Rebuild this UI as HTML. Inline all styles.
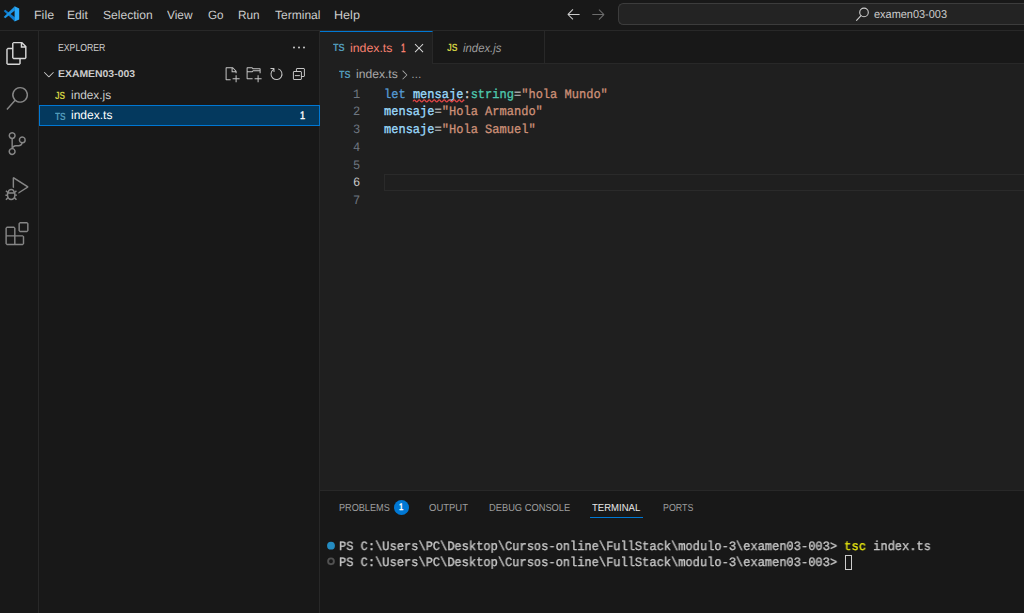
<!DOCTYPE html>
<html><head><meta charset="utf-8">
<style>
*{margin:0;padding:0;box-sizing:border-box}
html,body{width:1024px;height:613px;overflow:hidden;background:#181818}
body{position:relative;font-family:"Liberation Sans",sans-serif;color:#cccccc;-webkit-font-smoothing:antialiased;text-rendering:geometricPrecision}
.a{position:absolute}
.t{position:absolute;white-space:pre;line-height:1;transform-origin:0 0}
.mono{font-family:"Liberation Mono",monospace}
#titlebar{left:0;top:0;width:1024px;height:31px;background:#181818;border-bottom:1px solid #282828}
#activity{left:0;top:31px;width:39px;height:582px;background:#181818;border-right:1px solid #282828}
#sidebar{left:39px;top:31px;width:281px;height:582px;background:#181818;border-right:1px solid #282828}
#editor{left:320px;top:31px;width:704px;height:459px;background:#1f1f1f}
#tabs{left:320px;top:31px;width:704px;height:33px;background:#181818;border-bottom:1px solid #282828}
#tab1{left:320px;top:31px;width:113px;height:33px;background:#1f1f1f;border-top:1px solid #0078d4;border-right:1px solid #282828}
#tab2{left:433px;top:31px;width:112px;height:33px;background:#181818;border-right:1px solid #282828;border-bottom:1px solid #282828}
#panel{left:320px;top:490px;width:704px;height:123px;background:#181818;border-top:1px solid #282828}
#cmd{left:618.2px;top:2.7px;width:405.8px;height:22.2px;background:#232323;border:1px solid #3c3c3c;border-right:none;border-radius:5.5px 0 0 5.5px}
#selrow{left:39px;top:105px;width:281px;height:21px;background:#04395e;border:1px solid #0078d4}
#curline{left:384px;top:174px;width:640px;height:17px;border:1px solid #2a2a2a;border-right:none}
.menu{font-size:12px;color:#cccccc}
.code{font-size:12.8px;transform:scaleX(0.94);-webkit-text-stroke:0.3px}
.ln{font-size:12.8px;color:#6e7681;transform:scaleX(0.94)}
.term{font-size:12.8px;color:#c8c8c8;transform:scaleX(0.94);will-change:transform;-webkit-text-stroke:0.35px currentColor}
.ptab{font-size:10.2px;color:#9d9d9d}
</style></head><body>
<div class="a" id="titlebar"></div>
<div class="a" id="activity"></div>
<div class="a" id="sidebar"></div>
<div class="a" id="editor"></div>
<div class="a" id="tabs"></div>
<div class="a" id="tab1"></div>
<div class="a" id="tab2"></div>
<div class="a" id="panel"></div>
<div class="a" id="cmd"></div>
<div class="a" id="selrow"></div>
<div class="a" id="curline"></div>

<!-- menu -->
<span class="t menu" id="m1" style="top:9px;left:34.0px;transform:scaleX(1.038)">File</span>
<span class="t menu" id="m2" style="top:9px;left:67.0px;transform:scaleX(1.013)">Edit</span>
<span class="t menu" id="m3" style="top:9px;left:103.0px;transform:scaleX(1.006)">Selection</span>
<span class="t menu" id="m4" style="top:9px;left:167.0px;transform:scaleX(0.988)">View</span>
<span class="t menu" id="m5" style="top:9px;left:208.0px;transform:scaleX(0.972)">Go</span>
<span class="t menu" id="m6" style="top:9px;left:238.0px;transform:scaleX(0.985)">Run</span>
<span class="t menu" id="m7" style="top:9px;left:275.0px;transform:scaleX(1.002)">Terminal</span>
<span class="t menu" id="m8" style="top:9px;left:334.0px;transform:scaleX(1.050)">Help</span>
<span class="t" id="cmdt" style="left:874.0px;top:10px;font-size:11.5px;color:#cccccc;transform:scaleX(0.951)">examen03-003</span>

<!-- sidebar -->
<span class="t" id="s1" style="left:58.0px;top:44px;font-size:10.2px;color:#cccccc;transform:scaleX(0.854)">EXPLORER</span>
<span class="t" id="s2" style="left:58.0px;top:70px;font-size:9.9px;font-weight:bold;color:#cccccc;transform:scaleX(1.055)">EXAMEN03-003</span>
<span class="t" id="s3i" style="left:55.0px;top:91px;font-size:10.5px;font-weight:bold;color:#cbcb41;transform:scaleX(0.790)">JS</span>
<span class="t" id="s3" style="left:71.0px;top:89px;font-size:12px;color:#cccccc;transform:scaleX(0.985)">index.js</span>
<span class="t" id="s4i" style="left:55.0px;top:112px;font-size:10.5px;font-weight:bold;color:#519aba;transform:scaleX(0.799)">TS</span>
<span class="t" id="s4" style="left:71.0px;top:109px;font-size:12px;color:#ffffff;transform:scaleX(1.001)">index.ts</span>
<span class="t" id="s5" style="-webkit-text-stroke:0.45px;left:300.0px;top:111.1px;font-size:11px;color:#ffffff;transform:scaleX(0.832)">1</span>

<!-- tabs -->
<span class="t" id="t1i" style="left:333.0px;top:43px;font-size:10.5px;font-weight:bold;color:#519aba;transform:scaleX(0.876)">TS</span>
<span class="t" id="t1" style="left:350.0px;top:42px;font-size:12px;color:#f88070;transform:scaleX(1.024)">index.ts</span>
<span class="t" id="t1n" style="-webkit-text-stroke:0.45px;left:401.0px;top:42px;font-size:12px;color:#f88070;transform:scaleX(0.670)">1</span>
<span class="t" id="t2i" style="left:447.0px;top:43px;font-size:10.5px;font-weight:bold;color:#cbcb41;transform:scaleX(0.822)">JS</span>
<span class="t" id="t2" style="left:463.0px;top:42px;font-size:12px;font-style:italic;color:#9d9d9d;transform:scaleX(0.945)">index.js</span>

<!-- breadcrumb -->
<span class="t" id="b1i" style="left:339.0px;top:70px;font-size:10.5px;font-weight:bold;color:#519aba;transform:scaleX(0.861)">TS</span>
<span class="t" id="b1" style="left:356.0px;top:68px;font-size:12px;color:#a9a9a9;transform:scaleX(1.010)">index.ts</span>
<span class="t" id="b2" style="left:411.0px;top:68px;font-size:12px;color:#a9a9a9;transform:scaleX(0.890)">…</span>

<!-- code -->
<span class="t mono ln" style="left:352.9px;top:88.6px">1</span>
<span class="t mono ln" style="left:352.9px;top:106.4px">2</span>
<span class="t mono ln" style="left:352.9px;top:124.1px">3</span>
<span class="t mono ln" style="left:352.9px;top:141.9px">4</span>
<span class="t mono ln" style="left:352.9px;top:159.7px">5</span>
<span class="t mono ln" style="left:352.9px;top:177.4px;color:#cccccc">6</span>
<span class="t mono ln" style="left:352.9px;top:195.2px">7</span>
<span class="t mono code" id="c1" style="left:384px;top:88.6px"><span style="color:#569cd6">let</span> <span style="color:#9cdcfe">mensaje</span><span style="color:#d4d4d4">:</span><span style="color:#4ec9b0">string</span><span style="color:#b4b4b4">=</span><span style="color:#ce9178">"hola Mundo"</span></span>
<span class="t mono code" id="c2" style="left:384px;top:106.4px"><span style="color:#9cdcfe">mensaje</span><span style="color:#b4b4b4">=</span><span style="color:#ce9178">"Hola Armando"</span></span>
<span class="t mono code" id="c3" style="left:384px;top:124.1px"><span style="color:#9cdcfe">mensaje</span><span style="color:#b4b4b4">=</span><span style="color:#ce9178">"Hola Samuel"</span></span>

<!-- panel -->
<span class="t ptab" id="p1" style="top:504px;left:339.0px;transform:scaleX(0.896)">PROBLEMS</span>
<span class="t ptab" id="p2" style="top:504px;left:429.0px;transform:scaleX(0.932)">OUTPUT</span>
<span class="t ptab" id="p3" style="top:504px;left:489.0px;transform:scaleX(0.914)">DEBUG CONSOLE</span>
<span class="t ptab" id="p4" style="top:504px;left:592.0px;color:#e7e7e7;transform:scaleX(0.937)">TERMINAL</span>
<span class="t ptab" id="p5" style="top:504px;left:663.0px;transform:scaleX(0.868)">PORTS</span>
<div class="a" style="left:590px;top:517px;width:53px;height:1px;background:#0078d4"></div>
<div class="a" style="left:393.8px;top:499.6px;width:15px;height:15px;border-radius:50%;background:#0078d4"></div>
<span class="t" id="pb" style="-webkit-text-stroke:0.45px;left:399.4px;top:503px;font-size:9.6px;color:#fff;transform:scaleX(0.8)">1</span>

<span class="t mono term" id="x1" style="left:338.5px;top:540.5px">PS C:\Users\PC\Desktop\Cursos-online\FullStack\modulo-3\examen03-003&gt; <span style="color:#e5e510">tsc</span> index.ts</span>
<span class="t mono term" id="x2" style="left:338.5px;top:556.5px">PS C:\Users\PC\Desktop\Cursos-online\FullStack\modulo-3\examen03-003&gt; </span>
<div class="a" style="left:845px;top:555px;width:7px;height:15px;border:1px solid #cccccc"></div>

<svg class="a" id="icons" style="left:0;top:0" width="1024" height="613" viewBox="0 0 1024 613" fill="none" stroke-linecap="round" stroke-linejoin="round">
<!-- vscode logo -->
<g stroke="none">
<path d="M3.7 11.0 L5.3 9.7 L14.8 17.3 V21.6 Z" fill="#0c7bcf"/>
<path d="M3.7 16.9 L5.3 18.2 L14.8 10.6 V6.3 Z" fill="#1a93e4"/>
<path d="M14.6 6.3 L19.2 8.5 V19.4 L14.6 21.6 Z" fill="#2aa9f7"/>
</g>
<!-- title arrows -->
<path stroke="none" fill="#cccccc" transform="translate(565.6 6.0)" d="M7 3.093l-5 5V8.8l5 5 .707-.707-4.146-4.147H14v-1H3.56L7.707 3.8 7 3.093z"/>
<path stroke="none" fill="#6c6c6c" transform="translate(590.3 6.0)" d="M9 13.887l5-5V8.18l-5-5-.707.707 4.146 4.147H2v1h10.44L8.293 13.18l.707.707z"/>
<!-- cmd search -->
<g stroke="#cccccc" stroke-width="1.1"><circle cx="864" cy="12.4" r="4.3"/><path d="M861 15.6 L856.6 20.4"/></g>
<!-- activity: files -->
<g stroke="none" fill-rule="evenodd">
<path fill="#d7d7d7" transform="translate(5.3 41.9) scale(0.965)" d="M17.5 0h-9L7 1.5V6H2.5L1 7.5v15.07L2.5 24h12.07L16 22.57V18h4.7l1.3-1.43V4.5L17.5 0zm0 2.12l2.38 2.38H17.5V2.12zm-3 20.38h-12v-15H7v9.07L8.5 18h6v4.5zm6-6h-12v-15H16V6h4.5v10.5z"/>
<path fill="#868686" transform="translate(5.4 86.9) scale(0.965)" d="M15.25 0a8.25 8.25 0 0 0-6.18 13.72L1 22.88l1.12 1 8.05-9.12A8.251 8.251 0 1 0 15.25.01V0zm0 15a6.75 6.75 0 1 1 0-13.5 6.75 6.75 0 0 1 0 13.5z"/>
<path fill="#868686" transform="translate(5.6 132.0) scale(0.965)" d="M21.007 8.222A3.738 3.738 0 0 0 15.045 5.2a3.737 3.737 0 0 0 1.156 6.583 2.988 2.988 0 0 1-2.668 1.67h-2.99a4.456 4.456 0 0 0-2.989 1.165V7.4a3.737 3.737 0 1 0-1.494 0v9.117a3.776 3.776 0 1 0 1.816.099 2.99 2.99 0 0 1 2.668-1.667h2.99a4.484 4.484 0 0 0 4.223-3.039 3.736 3.736 0 0 0 3.25-3.687zM4.565 3.738a2.242 2.242 0 1 1 4.484 0 2.242 2.242 0 0 1-4.484 0zm4.484 16.441a2.242 2.242 0 1 1-4.484 0 2.242 2.242 0 0 1 4.484 0zm8.221-9.715a2.242 2.242 0 1 1 0-4.485 2.242 2.242 0 0 1 0 4.485z"/>
<path fill="#868686" transform="translate(5.4 177.1) scale(0.965)" d="M10.94 13.5l-1.32 1.32a3.73 3.73 0 0 0-7.24 0L1.06 13.5 0 14.56l1.72 1.72-.22.22V18H0v1.5h1.5v.08c.077.489.214.966.41 1.42L0 22.94 1.06 24l1.65-1.65A4.308 4.308 0 0 0 6 24a4.31 4.31 0 0 0 3.29-1.65L10.94 24 12 22.94 10.09 21c.198-.464.336-.951.41-1.45v-.1H12V18h-1.500v-1.500l-.22-.22L12 14.56l-1.06-1.06zM6 13.500a2.25 2.25 0 0 1 2.25 2.25h-4.500A2.25 2.25 0 0 1 6 13.500zm3 6a3.33 3.33 0 0 1-3 3 3.33 3.33 0 0 1-3-3v-2.25h6v2.25zm14.760-9.900v1.260L13.500 17.370V15.600l8.500-5.370L9 2v9.460a5.070 5.070 0 0 0-1.500-.72V.630L8.640 0l15.120 9.600z"/>
<path fill="#868686" transform="translate(5.4 222.1) scale(0.965)" d="M13.500 1.500L15 0h7.500L24 1.500V9l-1.500 1.500H15L13.500 9V1.500zm1.500 0V9h7.500V1.500H15zM0 15V6l1.500-1.500H9L10.500 6v7.500H18l1.500 1.500v7.500L18 24H1.500L0 22.500V15zm9-1.500V6H1.500v7.500H9zM9 15H1.500v7.500H9V15zm1.500 7.500H18V15h-7.500v7.500z"/>
</g>
<!-- sidebar ... -->
<path stroke="none" fill="#cccccc" transform="translate(291 39.6)" d="M4 8a1 1 0 1 1-2 0 1 1 0 0 1 2 0zm5 0a1 1 0 1 1-2 0 1 1 0 0 1 2 0zm5 0a1 1 0 1 1-2 0 1 1 0 0 1 2 0z"/>
<!-- chevron down -->
<path stroke="none" fill="#cccccc" transform="translate(40.9 66.2)" d="M7.976 10.072l4.357-4.357.62.618L8.284 11h-.618L3 6.333l.619-.618 4.357 4.357z"/>
<!-- new file -->
<g fill="#c5c5c5" stroke="none" fill-rule="evenodd">
<path transform="translate(223.6 66.3)" d="M9.5 1.1l3.4 3.5.1.4v2h-1V6H8V2H3v11h4v1H2.5l-.5-.5v-12l.5-.5h6.7l.3.1zM9 2v3h2.9L9 2zm4 14h-1v-3H9v-1h3V9h1v3h3v1h-3v3z"/>
<path transform="translate(245.6 66.3)" d="M14.5 2H7.71l-.85-.85L6.51 1h-5l-.5.5v11l.5.5H7v-1H1.99V6h4.49l.35-.15.86-.86H14v1.5l-.001.51h1.011V2.5L14.5 2zm-.51 2h-6.5l-.35.15-.86.86H2v-3h4.29l.85.85.36.15H14l-.01.99zM13 16h-1v-3H9v-1h3V9h1v3h3v1h-3v3z"/>
<path transform="translate(268.5 66.1)" d="M4.681 3H2V2h3.5l.5.5V6H5V4a5 5 0 1 0 4.53-.761l.302-.954A6 6 0 1 1 4.681 3z"/>
<path transform="translate(290.9 66.1)" d="M9 9H4v1h5V9z"/>
<path transform="translate(290.9 66.1)" d="M5 3l1-1h7l1 1v7l-1 1h-2v2l-1 1H3l-1-1V6l1-1h2V3zm1 2h4l1 1v4h2V3H6v2zm4 1H3v7h7V6z"/>
</g>
<!-- tab close -->
<path stroke="none" fill="#d8d8d8" transform="translate(411.05 40.1)" d="M8 8.707l3.646 3.647.708-.707L8.707 8l3.647-3.646-.707-.708L8 7.293 4.354 3.646l-.707.708L7.293 8l-3.646 3.646.707.708L8 8.707z"/>
<!-- breadcrumb chevron -->
<path stroke="none" fill="#a9a9a9" transform="translate(397 67.5) scale(0.93)" d="M10.072 8.024L5.715 3.667l.618-.62L11 7.716v.618L6.333 13l-.618-.619 4.357-4.357z"/>
<!-- terminal dots -->
<circle cx="331" cy="545.7" r="3.9" fill="#248cc2" stroke="none"/>
<circle cx="331" cy="561.3" r="2.9" stroke="#515151" stroke-width="1.9"/>
<!-- squiggle -->
<path d="M413 101.5 Q414.25 99.0 415.50 100.9 Q416.75 102.8 418.00 100.9 Q419.25 99.0 420.50 100.9 Q421.75 102.8 423.00 100.9 Q424.25 99.0 425.50 100.9 Q426.75 102.8 428.00 100.9 Q429.25 99.0 430.50 100.9 Q431.75 102.8 433.00 100.9 Q434.25 99.0 435.50 100.9 Q436.75 102.8 438.00 100.9 Q439.25 99.0 440.50 100.9 Q441.75 102.8 443.00 100.9 Q444.25 99.0 445.50 100.9 Q446.75 102.8 448.00 100.9 Q449.25 99.0 450.50 100.9 Q451.75 102.8 453.00 100.9 Q454.25 99.0 455.50 100.9 Q456.75 102.8 458.00 100.9 Q459.25 99.0 460.50 100.9 Q461.75 102.8 463.00 100.9 Q463.50 99.0 464.00 100.9" stroke="#e04545" stroke-width="1.25" stroke-linecap="butt"/>
</svg>
</body></html>
